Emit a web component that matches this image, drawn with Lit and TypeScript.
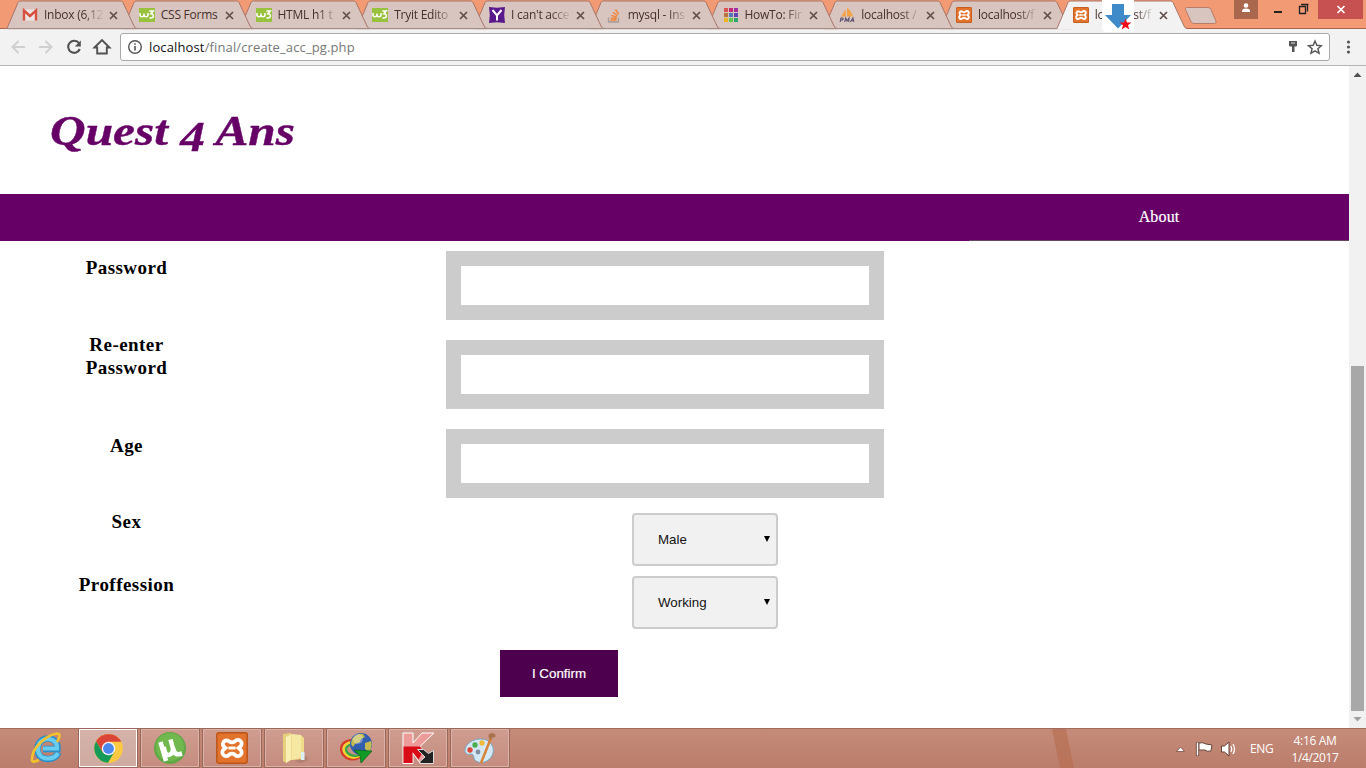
import { LitElement, html, svg, css } from "lit";
import { customElement, property } from "lit/decorators.js";

const xamppMark = (s: number) => svg`
  <g transform="scale(${s})">
    <rect x="0" y="0" width="16" height="16" rx="1.500" fill="#e2732c"/>
    <rect x="0.4" y="0.4" width="15.200" height="15.200" rx="1.200" fill="none" stroke="#b9541a" stroke-width="0.7"/>
    <path d="M5.300 4.200a1.900 1.900 0 0 0-1.300 3.200l.7.600-.7.600a1.900 1.900 0 1 0 2.600 2.700Q8 10.300 9.400 11.300A1.900 1.900 0 1 0 12 8.600l-.7-.6.7-.6a1.900 1.900 0 1 0-2.600-2.700Q8 5.700 6.600 4.700a1.900 1.900 0 0 0-1.300-.5z" fill="none" stroke="#fff" stroke-width="1.900"/>
    <path d="M6.200 8h3.600" stroke="#fff" stroke-width="1.500"/>
  </g>`;

const w3 = svg`<rect width="16" height="14" y="1" fill="#98c13d"/>
  <path d="M1 6v1.700q0 2 2 2t2-2V6.500v1.200q0 2 2 2t2-2V6" fill="none" stroke="#fff" stroke-width="1.500"/>
  <path d="M10.300 4h4l-2.400 2.700q2.700.2 2.500 2.500-.6 2.300-3.900 1.600" fill="none" stroke="#fff" stroke-width="1.500"/>`;

const hues = ["#d9534f", "#c2277c", "#a12fa0", "#b8743a", "#5577b8", "#5c46b0", "#f0b429", "#5fc94a", "#2ba56b"];

const favicons: Record<string, unknown> = {
  gmail: svg`<path d="M2 2.500h12v11H2z" fill="#ece4e2"/><path d="M2 13.500V3.500l6 5.500 6-5.500v10" fill="none" stroke="#d64f3f" stroke-width="2.400"/>`,
  w3,
  yahoo: svg`<path d="M0 0l8 .8L16 0l-.8 8 .8 8-8-.8L0 16l.8-8z" fill="#5b1a8b"/><path d="M3.500 3l4.500 5.500L12.500 3M8 8.500V13.500" fill="none" stroke="#fff" stroke-width="2"/>`,
  stack: svg`<path d="M2.500 10.500v4.500h10v-4.500" fill="none" stroke="#a79b98" stroke-width="1.300"/><path d="M4.500 13h6M4.600 10.900l6 .6M5.300 8.300l5.600 1.800M6.900 5.200l4.700 3.500M9.500 2.500l3.200 4.900" stroke="#ef8236" stroke-width="1.400"/>`,
  grid: hues.map((c, i) => svg`<rect x=${1 + (i % 3) * 5} y=${1 + Math.floor(i / 3) * 5} width="4" height="4" fill=${c}/>`),
  pma: svg`<path d="M2 9.500C4 7 5 4.500 6.500 2.500L7 9.500zM8 9.500V.5q4 3 6 9z" fill="#f5a245"/><path d="M1.200 15l.7-4h1.600q1 .2.6 1.200-.4 1-2.200.8M5.800 15l.9-4 1.300 3 2-3-.3 4M11.300 15l2.700-4 .8 4M12.200 13.700h2.300" fill="none" stroke="#5a5270" stroke-width="1.100"/>`,
  xampp: xamppMark(1),
};

@customElement("browser-tab")
class BrowserTab extends LitElement {
  @property() icon = "";
  @property() label = "";
  @property({ type: Boolean, reflect: true }) active = false;

  static styles = css`
    :host { display: grid; width: 116.75px; height: 29px; flex: none; }
    .shape, .row { grid-area: 1 / 1; }
    .shape { width: 130px; height: 29px; overflow: visible; }
    .row { display: flex; align-items: center; padding: 1px 0 0 15.500px; height: 27px; z-index: 1; }
    .icon { width: 16px; height: 16px; flex: none; margin-top: 1px; }
    .label { width: 64px; margin-left: 6px; font-size: 12px; letter-spacing: -0.25px; line-height: 18px; white-space: nowrap; color: #45302c;
      -webkit-mask-image: linear-gradient(90deg, #000 40px, transparent 60px); mask-image: linear-gradient(90deg, #000 40px, transparent 60px); }
    .close { width: 9px; height: 9px; margin: 1px 0 0 0.500px; flex: none; }
    .full { -webkit-mask-image: none; mask-image: none; }
  `;

  render() {
    const fill = this.active ? "#f2f2f2" : "#d9c5bf";
    return html`
      <svg class="shape" viewBox="0 0 130 29">
        <path d="M0 28.500L11 2.500Q11.700 1 13.500 1H113.500Q115.300 1 116 2.500L127 26Q128 28.500 130 28.500V29.500H0Z" fill=${fill}/>
        <path d="M0 28.500L11 2.500Q11.700 1 13.500 1H113.500Q115.300 1 116 2.500L127 26Q128 28.500 130 28.500" fill="none" stroke="#a97568"/>
        ${this.active ? "" : svg`<path d="M0 28.500H130" stroke="#a18c87"/>`}
      </svg>
      <div class="row">
        <svg class="icon" viewBox="0 0 16 16">${favicons[this.icon]}</svg>
        <span class="label ${this.label === "CSS Forms" ? "full" : ""}">${this.label}</span>
        <svg class="close" viewBox="0 0 9 9"><path d="M1 1l7 7M8 1l-7 7" stroke="#624f4b" stroke-width="1.700"/></svg>
      </div>`;
  }
}

const tabs = [
  ["gmail", "Inbox (6,12"], ["w3", "CSS Forms"], ["w3", "HTML h1 t"], ["w3", "Tryit Edito"],
  ["yahoo", "I can't acce"], ["stack", "mysql - Ins"], ["grid", "HowTo: Fir"], ["pma", "localhost /"],
  ["xampp", "localhost/f"], ["xampp", "localhost/f"],
];

const taskIcons = [
  // chrome
  svg`<path d="M16 16L3 8.500A15 15 0 0 1 29 8.500z" fill="#dc4437"/><circle cx="16" cy="16" r="14.800" fill="#fbc942"/><path d="M16 9h13.100A15 15 0 0 0 3.200 8.500L10 20z" fill="#dc4437"/><path d="M3.200 8.500A15 15 0 0 0 15.500 30.800L22 19.500 10 20z" fill="#159a57"/><circle cx="16" cy="16" r="7" fill="#f5f5f5"/><circle cx="16" cy="16" r="5.600" fill="#4b87ec"/>`,
  // utorrent
  svg`<circle cx="16" cy="16" r="16" fill="#5fa845"/><circle cx="16" cy="15" r="14" fill="#71b84f"/><path d="M6.500 10l5.500 19M9.500 15l1.500 5q1.500 4 5 2.500Q20 20.500 18.500 15l-2-7.500M18.500 15l2 5q1.500 3.500 7.500 1.500" fill="none" stroke="#fff" stroke-width="4.500"/>`,
  // xampp
  xamppMark(2),
  // folder
  svg`<path d="M17 29l12-5 1 5-8 2z" fill="#987064" opacity=".45"/><path d="M5 2l8-1v27l-5 3-3-2z" fill="#e7d07b"/><path d="M8 5l6-3v25l-6 4z" fill="#f8efb5"/><path d="M13 3h10l3 3v21l-13 1z" fill="#f0db88"/><path d="M14 2l9 1v22l-9 3z" fill="#f5e8a5"/><path d="M23 20h3.500v8H23z" fill="#dff0f5"/>`,
  // download manager
  svg`<g fill="none" stroke-width="2.300" transform="rotate(12 13 18)"><ellipse cx="12" cy="18" rx="11" ry="9.500" stroke="#d83b24"/><ellipse cx="13" cy="18" rx="9.500" ry="7.500" stroke="#f6d42c"/><ellipse cx="14" cy="18" rx="8" ry="5.500" stroke="#36a744"/></g><circle cx="21" cy="12" r="11" fill="#315fae"/><path d="M12 7q5-6 11-5l2 3-4 2-1 3-5 2-2 3-2-3zM25 11l6-2q2 5-2 11l-4-3z" fill="#c4ba50"/><circle cx="18" cy="7" r="5" fill="#fff" opacity=".3"/><path d="M14 18l18 1-11 12-1-7z" fill="#119b25" stroke="#086016" stroke-width=".7"/>`,
  // kaspersky
  svg`<path d="M1 1h10v10L20 1h12L18 14.500l8 9.500-5 7h-3L11 21v10.500H1z" fill="#ed9b99" stroke="#fff"/><path d="M1.500 14.500H18l3.500 4.500-5 8.500L10.500 20v11h-9z" fill="#d90d17"/><path d="M15.500 17.500h6l5 4 5-3v13H18v-2l5-4.500z" fill="#222" stroke="#ddd"/>`,
  // paint
  svg`<path d="M15 7C5 8 0 15 1 20q2 4 6 2 3 0 3 5 5 6 13 2 8-5 6-14-4-9-14-8z" fill="#d3e8f4" stroke="#7ba4bd"/><circle cx="6" cy="18" r="2.700" fill="#dd4a3b"/><circle cx="11" cy="13" r="2.700" fill="#4aae50"/><circle cx="18" cy="11" r="2.700" fill="#eeba3b"/><circle cx="14" cy="20" r="2.400" fill="#7f8fa0"/><path d="M17 31L27 6" stroke="#d88335" stroke-width="2.500"/><path d="M25 6q-2-5 4-5 4 2 2 4-3 0-4 3z" fill="#a9744e"/>`,
];

@customElement("app-root")
class AppRoot extends LitElement {
  static styles = css`
    :host { display: flex; flex-direction: column; width: 1366px; height: 768px; overflow: hidden; background: #fff; font-family: "Open Sans", "Noto Sans", sans-serif; position: relative; }
    * { box-sizing: border-box; }
    svg { display: block; }
    .strip { height: 29px; flex: none; display: flex; align-items: flex-start; background: linear-gradient(#f19a73 28px, #a8664f 28px); padding-left: 6.500px; }
    .newtab { width: 34px; height: 29px; margin: 0 0 0 9px; flex: none; }
    .caption { display: flex; margin-left: auto; padding-right: 3px; }
    .profile { width: 24px; height: 19px; background: #a9684e; }
    .mid { width: 60px; height: 19px; }
    .quit { width: 45px; height: 19px; background: #c75050; }
    .toolbar { height: 37px; flex: none; display: flex; align-items: center; background: #f2f2f2; border-bottom: 1px solid #b6b4b6; }
    .navs { width: 120px; height: 36px; }
    .omni { display: flex; align-items: center; width: 1210px; height: 28px; background: #fff; border: 1px solid #a9a9a9; border-radius: 3px; padding: 0 6px 0 6px; }
    .url { font-size: 13px; line-height: 18px; margin-left: 6px; color: #777; flex: 1; letter-spacing: 0.130px; }
    .url b { font-weight: 400; color: #111; }
    .dots { width: 36px; height: 36px; }
    .view { flex: 1; display: flex; min-height: 0; }
    .page { width: 1349px; background: #fff; font-family: "Liberation Serif", serif; }
    .head { height: 128px; padding: 41px 0 0 50px; }
    .brand { margin: 0; font: italic bold 42px/48px "Liberation Serif", serif; color: #606; transform: scaleX(1.175); transform-origin: 0 0; width: 240px; white-space: nowrap; -webkit-text-stroke: 0.400px #606; }
    .four { display: inline-block; transform: translateY(6px); }
    .nav { height: 47px; background: #606; display: flex; justify-content: flex-end; }
    .about { width: 380px; height: 47px; border-bottom: 1px solid #64485f; color: #fff; font-size: 16px; line-height: 46px; text-align: center; letter-spacing: 0.150px; -webkit-text-stroke: 0.200px #fff; }
    .form { display: grid; grid-template-columns: 253px 1fr; grid-template-rows: 89px 89px 89px 63px 63px auto; }
    .name { font-weight: bold; font-size: 19px; line-height: 23px; letter-spacing: 0.450px; text-align: center; padding-top: 3px; color: #000; }
    .low { padding-top: 15px; }
    .mini { padding-top: 2px; }
    .field { appearance: none; display: block; width: 438px; height: 69px; margin: 10px 0 0 193px; border: 15px solid #ccc; border-radius: 0; padding: 0; background: #fff; outline: 0; }
    .pick { display: flex; align-items: center; justify-content: space-between; width: 146px; height: 53px; margin: 5px 0 0 379px; border: 2px solid #ccc; border-radius: 4px; background: #f1f1f1; padding: 0 5px 0 24px; font: 13.330px "Liberation Sans", sans-serif; color: #111; }
    .pick svg { margin-bottom: 2px; }
    .send { grid-column: 2; width: 118px; height: 47px; margin: 16px 0 0 247px; border: 0; padding: 0; background: #4d004d; color: #fff; font: 13.330px "Liberation Sans", sans-serif; -webkit-text-stroke: 0.200px #fff; }
    .scroll { width: 17px; background: #f1f1f1; display: flex; flex-direction: column; align-items: center; }
    .thumb { width: 13px; height: 345px; background: #a8a8a8; margin-top: 283px; }
    .task { height: 40px; flex: none; display: flex; background: linear-gradient(#a16c5e 1px, #c58b79 1px, #bb7d6c); color: #fff; }
    .ie { width: 78px; height: 40px; }
    .app { width: 60px; height: 40px; margin-right: 2px; border: 1px solid #9a675b; box-shadow: inset 0 0 0 1px #dbb2a6; background: linear-gradient(#cf9d90, #c48c7e); display: flex; align-items: center; justify-content: center; }
    .current { background: linear-gradient(#d5b3aa, #ceaaa0); box-shadow: inset 0 0 0 1px #fff; }
    .app svg { width: 32px; height: 32px; }
    .current svg { width: 31px; height: 31px; }
    .streak { width: 24px; height: 40px; margin-left: 540px; }
    .tray { width: 66px; height: 40px; margin-left: 96px; }
    .lang { font-size: 12px; line-height: 41px; margin-left: 12px; width: 28px; letter-spacing: -0.300px; }
    .clock { font-size: 12px; line-height: 17px; padding-top: 4px; text-align: center; width: 60px; margin-left: 7px; letter-spacing: -0.350px; white-space: nowrap; }
    .badge { position: absolute; left: 1102px; top: 0; width: 32px; height: 32px; z-index: 30; }
  `;

  render() {
    return html`
      <div class="strip">
        ${tabs.map(([icon, label], i) => html`<browser-tab style="z-index:${i === 9 ? 20 : 10 - i}" .icon=${icon} .label=${label} ?active=${i === 9}></browser-tab>`)}
        <svg class="newtab" viewBox="0 0 34 29"><path d="M3.500 7.500H25Q27 7.500 28 9.500L33 21.500Q33.500 23.500 31.500 23.500H11Q9 23.500 8 21.500L2.500 9.500Q2 7.500 3.500 7.500z" fill="#d9c5bf" stroke="#b87c68"/></svg>
        <div class="caption">
          <svg class="profile" viewBox="0 0 24 19"><circle cx="12" cy="5.500" r="2.300" fill="#fff"/><path d="M8 12V10.500Q8.500 8.500 12 8.500T16 10.500V12z" fill="#fff"/></svg>
          <svg class="mid" viewBox="0 0 60 19"><path d="M16 12h8" stroke="#222" stroke-width="2"/><path d="M43.500 4.500h6v7M41.500 6.500h6v7h-6z" fill="none" stroke="#222" stroke-width="1.300"/><path d="M43 4.500h7.500" stroke="#222"/></svg>
          <svg class="quit" viewBox="0 0 45 19"><path d="M19.500 6l7 7M26.500 6l-7 7" stroke="#fff" stroke-width="1.700"/></svg>
        </div>
      </div>
      <div class="toolbar">
        <svg class="navs" viewBox="0 0 120 36" fill="none">
          <path d="M25 18H12.500M18.500 12l-6 6 6 6M39 18H51.500M45.500 12l6 6-6 6" stroke="#cfcfcf" stroke-width="1.900"/>
          <path d="M79 14.200A6 6 0 1 0 79.800 20" stroke="#525252" stroke-width="2.100"/><path d="M80.800 11.500v6h-6z" fill="#525252"/>
          <path d="M94.500 18.500L102 11l7.500 7.500h-2.700v6h-9.600v-6z" stroke="#525252" stroke-width="1.900"/>
        </svg>
        <div class="omni">
          <svg width="16" height="16" viewBox="0 0 16 16"><circle cx="8" cy="8" r="6.300" fill="none" stroke="#555" stroke-width="1.400"/><path d="M8 7v4.500M8 4.200v1.600" stroke="#555" stroke-width="1.600"/></svg>
          <span class="url"><b>localhost</b>/final/create_acc_pg.php</span>
          <svg width="36" height="18" viewBox="0 0 36 18"><path d="M2 3h8v4.500q0 1-1 1H7.500V14H5V8.500H3q-1 0-1-1z" fill="#555"/><path d="M4 5h4" stroke="#ddd"/><path d="M28 3l1.800 4.300 4.700.4-3.600 3 1.200 4.600L28 12.800l-4.100 2.500 1.200-4.600-3.600-3 4.700-.4z" fill="none" stroke="#555" stroke-width="1.400"/></svg>
        </div>
        <svg class="dots" viewBox="0 0 36 36"><g fill="#555"><circle cx="18.500" cy="13" r="1.600"/><circle cx="18.500" cy="18" r="1.600"/><circle cx="18.500" cy="23" r="1.600"/></g></svg>
      </div>
      <div class="view">
        <div class="page">
          <div class="head"><h1 class="brand">Quest <span class="four">4</span> Ans</h1></div>
          <div class="nav"><div class="about">About</div></div>
          <div class="form">
            <div class="name low">Password</div><input class="field">
            <div class="name">Re-enter<br>Password</div><input class="field">
            <div class="name low">Age</div><input class="field">
            <div class="name mini">Sex</div>${this.pick("Male")}
            <div class="name mini">Proffession</div>${this.pick("Working")}
            <button class="send">I Confirm</button>
          </div>
        </div>
        <div class="scroll">
          <svg width="17" height="17" viewBox="0 0 17 17"><path d="M4.500 11h8l-4-4.500z" fill="#505050"/></svg>
          <div class="thumb"></div>
          <svg width="17" height="17" viewBox="0 0 17 17"><path d="M4.500 6h8l-4 4.500z" fill="#a0a0a0"/></svg>
        </div>
      </div>
      <div class="task">
        <svg class="ie" viewBox="0 0 78 40">
          <path d="M58.500 24.500C56 29.500 52.500 31 48 31 41 31 37.500 27 37.500 21S42 10.500 48 10.500 58 15 57.500 21H43" fill="none" stroke="#2b8fc8" stroke-width="6.500"/>
          <path d="M58 25C56 29 52.500 30.500 48 30.500 41.500 30.500 38 27 38 21S42 11 48 11s9.500 4.500 9 9.500H43" fill="none" stroke="#69cdf0" stroke-width="4.200"/>
          <path d="M57 14Q62 5.500 57 5.500 48 7 40 15T32 31.500Q32 35.500 39 32" fill="none" stroke="#f3c22d" stroke-width="2.600"/>
        </svg>
        ${taskIcons.map((g, i) => html`<div class="app ${i === 0 ? "current" : ""}"><svg viewBox="0 0 32 32">${g}</svg></div>`)}
        <svg class="streak" viewBox="0 0 24 40"><path d="M0 1h14l8 39H8z" fill="#b66d4d" opacity=".6"/></svg>
        <svg class="tray" viewBox="0 0 66 40">
          <path d="M4.500 23.500h8l-4-4.500z" fill="#fff" stroke="#7b5045" stroke-width=".8"/>
          <path d="M25.500 14v14" stroke="#654238" stroke-width="3.200"/><path d="M27 15q4-1 7 1l6 1-1 6q-4 1-6-1h-6z" fill="#fff" stroke="#654238"/><path d="M25.500 14.500v13" stroke="#fff" stroke-width="1.500"/>
          <path d="M49.500 18h3l4.500-4v14l-4.500-4h-3z" fill="#fff" stroke="#654238"/><path d="M59 18q1.500 3 0 6M61 16q3 5 0 10" fill="none" stroke="#fff" stroke-width="1.300"/>
        </svg>
        <div class="lang">ENG</div>
        <div class="clock">4:16 AM<br>1/4/2017</div>
      </div>
      <svg class="badge" viewBox="0 0 32 32"><rect width="32" height="36" y="-4" rx="4" fill="#fff"/><path d="M10 4h12v11h7L16 28.500 3 15h7z" fill="#3f8bca"/><path d="M23.500 18.500l1.500 4h4.500l-3.500 2.700 1.300 4.300-3.800-2.600-3.800 2.600 1.300-4.300-3.500-2.700H22z" fill="#ee0c18"/></svg>
    `;
  }

  pick(value: string) {
    return html`<div class="pick"><span>${value}</span><svg width="8" height="8" viewBox="0 0 8 8"><path d="M1 1h6L4 7z" fill="#000"/></svg></div>`;
  }
}
